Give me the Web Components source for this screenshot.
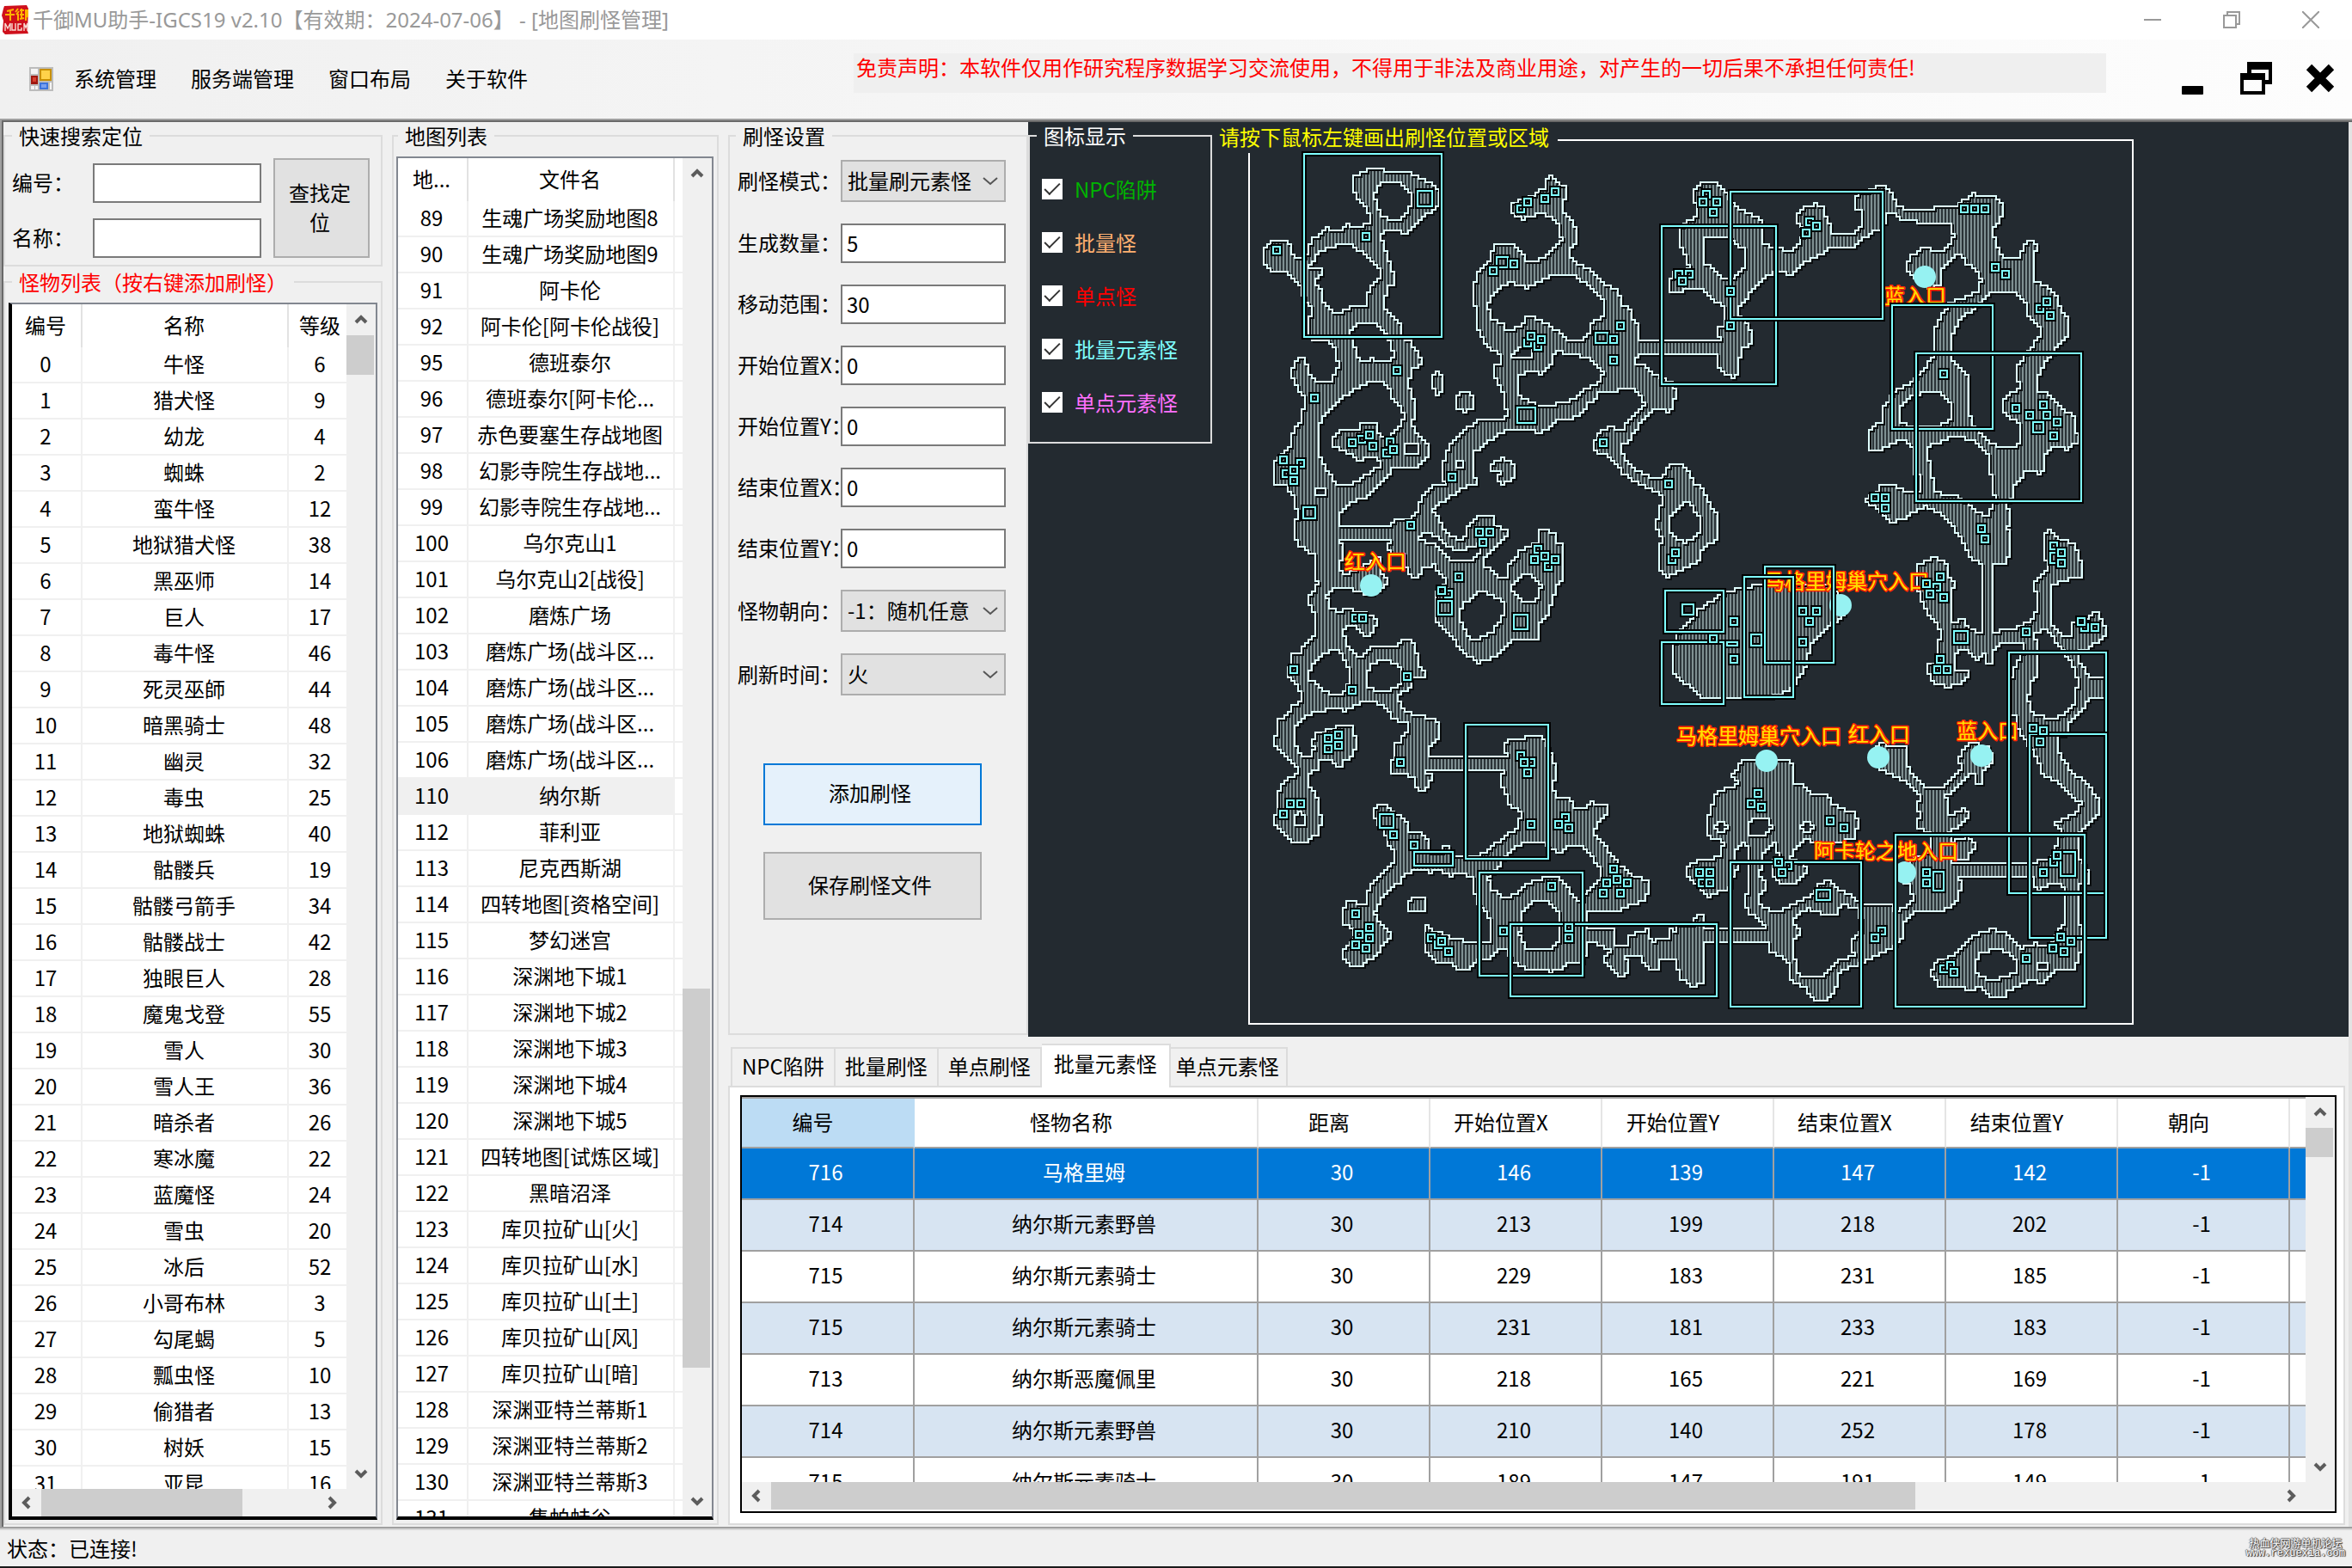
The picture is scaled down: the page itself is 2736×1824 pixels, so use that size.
<!DOCTYPE html>
<html lang="zh-CN">
<head>
<meta charset="utf-8">
<title>千御MU助手-IGCS19</title>
<style>
  html, body { margin: 0; height: 100%; }
  body { font: 24px/32px "Noto Sans CJK SC", "Noto Sans", sans-serif; color: #000; background: #f0f0f0; overflow: hidden; }
</style>
</head>
<body>
<app-window></app-window>
<script>
const define = (name, html, setup) => {
  const tpl = document.createElement('template');
  tpl.innerHTML = '<style>*{box-sizing:border-box}button,input,select{font:inherit;color:inherit;margin:0;border-radius:0}</style>' + html;
  customElements.define(name, class extends HTMLElement {
    connectedCallback() {
      if (this.shadowRoot) return;
      const root = this.attachShadow({ mode: 'open' });
      root.append(tpl.content.cloneNode(true));
      if (setup) setup.call(this, root);
    }
  });
};

/* ---------- title bar ---------- */
define('title-bar', `
<style>
  :host { display: flex; align-items: center; height: 46px; background: #fff; color: #999; padding-left: 2px; }
  .logo { width: 32px; height: 34px; margin-right: 4px; }
  span { flex: 1; white-space: nowrap; font-family: "Noto Sans", "Noto Sans CJK SC", sans-serif; }
  button { width: 92px; height: 46px; border: 0; background: none; padding: 0 4px 0 0; }
  button svg { display: block; margin: auto; }
</style>
<svg class="logo" viewBox="0 0 32 34"><path d="M3 1 L29 0 L31 4 L30 30 L31 33 L4 34 L1 31 L2 18 L0 12 L2 4Z" fill="#cf101c"/>
<path d="M6 7 L14 5 M4 11 H15 M10 6 V18 M19 4 L16 8 M20 7 L17 11 M19 10 V18 M21 6 H26 M23 4 V16 M21 11 H26 M21 16 L26 15 M27 6 H30 V13 L28 14 M28 5 V18" stroke="#ffb400" stroke-width="2" fill="none"/>
<path d="M4 30 V21 L7 27 L10 21 V30 M12 21 V29 H16 V21 M23 22 H19 V29 H23 V26 M26 30 V21 L28 26 L30 21 V30" stroke="#f8dcd4" stroke-width="1.4" fill="none"/></svg>
<span>千御MU助手-IGCS19 v2.10【有效期：2024-07-06】 - [地图刷怪管理]</span>
<button aria-label="最小化"><svg width="20" height="20"><path d="M0 10H20" stroke="#999" stroke-width="2"/></svg></button>
<button aria-label="还原"><svg width="20" height="20" fill="none" stroke="#999" stroke-width="2"><path d="M1 5H15V19H1ZM5 5V1H19V15H15"/></svg></button>
<button aria-label="关闭"><svg width="20" height="20"><path d="M0 0L20 20M20 0L0 20" stroke="#999" stroke-width="2"/></svg></button>
`);

/* ---------- menu bar ---------- */
define('menu-bar', `
<style>
  :host { display: flex; align-items: center; height: 92px; background: linear-gradient(90deg, #f0f0f0, #fdfdfd); padding-left: 34px; }
  nav { display: flex; gap: 40px; margin-left: 24px; padding-bottom: 2px; }
  nav button { border: 0; background: none; padding: 0; line-height: 32px; }
  p { flex: 1; margin: 2px 64px 16px 379px; height: 46px; padding: 0 0 0 3px; color: #f00; background: #efefef; white-space: nowrap; }
  .win { border: 0; background: none; padding: 0 0 2px; width: 74px; height: 46px; }
  .win svg { display: block; margin: auto; }
</style>
<svg width="28" height="28"><rect width="28" height="28" fill="#bcbcbc"/><path d="M2 2H10V8H2ZM2 22H6V26H2ZM7 22H10V26H7ZM24 18H26V26H24Z" fill="#f4f4f4"/><rect x="12" y="2" width="14" height="14" fill="#c89000"/><rect x="14" y="4" width="10" height="10" fill="#ffd24a"/><rect x="2" y="10" width="8" height="10" fill="#a01810"/><rect x="4" y="12" width="4" height="5" fill="#d84030"/><rect x="12" y="18" width="10" height="8" fill="#3c74dc"/><rect x="14" y="20" width="6" height="4" fill="#78a0f0"/></svg>
<nav><button>系统管理</button><button>服务端管理</button><button>窗口布局</button><button>关于软件</button></nav>
<p>免责声明：本软件仅用作研究程序数据学习交流使用，不得用于非法及商业用途，对产生的一切后果不承担任何责任!</p>
<button class="win" aria-label="最小化"><svg width="26" height="38"><rect y="28" width="25" height="10" rx="1"/></svg></button>
<button class="win" aria-label="还原"><svg width="38" height="38"><path d="M8 0H37V26H29V21H33V9H13V13H8ZM0 13H29V38H0ZM4 21V34H25V21Z" fill-rule="evenodd"/></svg></button>
<button class="win" aria-label="关闭"><svg width="34" height="34"><path d="M4 4L30 30M30 4L4 30" stroke="#000" stroke-width="9"/></svg></button>
`);

/* ---------- group box ---------- */
define('group-box', `
<style>
  :host { display: flex; min-height: 0; min-width: 0; }
  fieldset { flex: 1; min-width: 0; min-height: 0; margin: 0; border: 2px solid #dcdcdc; padding: var(--pad, 8px 4px 4px); display: flex; flex-direction: column; }
  legend { margin-left: var(--inset, 4px); padding: 0 8px; line-height: 32px; color: var(--title, inherit); }
</style>
<fieldset><legend></legend><slot></slot></fieldset>`, function (root) {
  root.querySelector('legend').textContent = this.getAttribute('label');
});

/* ---------- scroll bar ---------- */
define('scroll-bar', `
<style>
  :host { display: flex; flex-direction: column; width: 34px; background: #f0f0f0; }
  :host([across]) { flex-direction: row; width: auto; height: 32px; }
  button { flex: none; width: 34px; height: 36px; border: 0; padding: 0; background: none; }
  :host([across]) button { height: 32px; }
  svg { display: block; margin: auto; fill: none; stroke: #5c5c5c; stroke-width: 4; }
  .thumb { background: #cdcdcd; }
  :host(:not([across])) .thumb { margin-right: 2px; }
</style>
<button aria-label="向前"><svg width="18" height="18"><path/></svg></button>
<div class="before"></div><div class="thumb"></div><div class="after"></div>
<button aria-label="向后"><svg width="18" height="18"><path/></svg></button>`, function (root) {
  const start = +this.getAttribute('start'), size = +this.getAttribute('size');
  root.querySelector('.before').style.flex = start + ' 0 0';
  root.querySelector('.thumb').style.flex = size + ' 0 0';
  root.querySelector('.after').style.flex = (100 - start - size) + ' 0 0';
  const d = this.hasAttribute('across') ? ['M12 3L6 9L12 15', 'M6 3L12 9L6 15'] : ['M3 12L9 6L15 12', 'M3 6L9 12L15 6'];
  root.querySelectorAll('path').forEach((p, i) => p.setAttribute('d', d[i]));
});

/* ---------- quick search ---------- */
define('quick-search', `
<style>
  :host { display: flex; gap: 14px; align-items: flex-end; }
  .fields { display: grid; grid-template-columns: 94px 196px; row-gap: 18px; align-items: center; }
  label { padding-bottom: 2px; }
  input { width: 100%; height: 46px; border: 2px solid #7a7a7a; background: #fff; padding: 0 6px; }
  button { width: 112px; height: 116px; border: 2px solid #adadad; background: #e1e1e1; padding: 0 14px 2px 10px; line-height: 34px; }
</style>
<div class="fields"><label for="no">编号：</label><input id="no"><label for="nm">名称：</label><input id="nm"></div>
<button>查找定位</button>`);

/* ---------- list view ---------- */
const LISTS = {
  monsters: {
    cols: [82, 240, 76], head: ['编号', '名称', '等级'], v: [0, 3.5], h: [0, 73],
    rows: '牛怪 6,猎犬怪 9,幼龙 4,蜘蛛 2,蛮牛怪 12,地狱猎犬怪 38,黑巫师 14,巨人 17,毒牛怪 46,死灵巫師 44,暗黑骑士 48,幽灵 32,毒虫 25,地狱蜘蛛 40,骷髅兵 19,骷髅弓箭手 34,骷髅战士 42,独眼巨人 28,魔鬼戈登 55,雪人 30,雪人王 36,暗杀者 26,寒冰魔 22,蓝魔怪 24,雪虫 20,冰后 52,小哥布林 3,勾尾蝎 5,瓢虫怪 10,偷猎者 13,树妖 15,亚昆 16'
      .split(',').map((s, i) => [i, ...s.split(' ')])
  },
  maps: {
    cols: [82, 240, 76], head: ['地...', '文件名', ''], v: [61.7, 29.2], selected: '110',
    rows: ('89 生魂广场奖励地图8,90 生魂广场奖励地图9,91 阿卡伦,92 阿卡伦[阿卡伦战役],95 德班泰尔,96 德班泰尔[阿卡伦...,97 赤色要塞生存战地图,98 幻影寺院生存战地...,99 幻影寺院生存战地...,100 乌尔克山1,101 乌尔克山2[战役],102 磨炼广场,103 磨炼广场(战斗区...,104 磨炼广场(战斗区...,105 磨炼广场(战斗区...,106 磨炼广场(战斗区...,110 纳尔斯,112 菲利亚,113 尼克西斯湖,114 四转地图[资格空间],115 梦幻迷宫,116 深渊地下城1,117 深渊地下城2,118 深渊地下城3,119 深渊地下城4,120 深渊地下城5,121 四转地图[试炼区域],122 黑暗沼泽,123 库贝拉矿山[火],124 库贝拉矿山[水],125 库贝拉矿山[土],126 库贝拉矿山[风],127 库贝拉矿山[暗],128 深渊亚特兰蒂斯1,129 深渊亚特兰蒂斯2,130 深渊亚特兰蒂斯3,131 隽帕蛙谷')
      .split(',').map(s => [...s.split(' '), ''])
  }
};
const tableHTML = (d) => `<table style="width:${d.cols.reduce((a, b) => a + b)}px"><colgroup>${d.cols.map(w => `<col style="width:${w}px">`).join('')}</colgroup>
<thead><tr>${d.head.map(t => `<th>${t}</th>`).join('')}</tr></thead><tbody>${d.rows.map(r => `<tr${r[0] === d.selected ? ' class="sel"' : ''}>${r.map(c => `<td>${c}</td>`).join('')}</tr>`).join('')}</tbody></table>`;

define('list-view', `
<style>
  :host { flex: 1; min-height: 0; display: flex; flex-direction: column; background: #fff; border: 2px solid #828790; border-bottom: 4px solid #000; }
  :host([source=monsters]) { border-left: 4px solid #000; }
  .body { flex: 1; min-height: 0; display: flex; }
  .view { flex: 1; min-width: 0; overflow: hidden; }
  .body scroll-bar { flex: none; }
  .foot { display: flex; }
  .foot scroll-bar { flex: 1; }
  .corner { width: 34px; background: #f0f0f0; }
  table { table-layout: fixed; border-collapse: separate; border-spacing: 0; }
  th { height: 50px; font-weight: 400; padding: 0 2px 2px 0; border-right: 2px solid #e2e2e2; }
  td { height: 42px; padding: 0 2px 2px 0; text-align: center; white-space: nowrap; border: solid #f0f0f0; border-width: 0 2px 2px 0; }
  .sel td:not(:last-child) { background: #f0f0f0; }
</style>
<div class="body"><div class="view"></div></div>`, function (root) {
  const d = LISTS[this.getAttribute('source')];
  root.querySelector('.view').innerHTML = tableHTML(d);
  root.querySelector('.body').insertAdjacentHTML('beforeend', `<scroll-bar start="${d.v[0]}" size="${d.v[1]}"></scroll-bar>`);
  if (d.h) root.append(Object.assign(document.createElement('div'), { className: 'foot', innerHTML: `<scroll-bar across start="${d.h[0]}" size="${d.h[1]}"></scroll-bar><div class="corner"></div>` }));
});

/* ---------- settings ---------- */
define('spawn-form', `
<style>
  :host { display: flex; flex-direction: column; }
  .rows { display: flex; flex-direction: column; gap: 25px; }
  .row { display: grid; grid-template-columns: 120px 192px; align-items: center; }
  label { grid-column: 1; grid-row: 1; width: 120px; white-space: nowrap; padding-bottom: 2px; }
  input, select { grid-column: 2; grid-row: 1; width: 100%; }
  input { height: 46px; border: 2px solid #7a7a7a; background: #fff; padding: 0 5px 2px; outline: 0; position: relative; }
  select { appearance: none; height: 49px; border: 2px solid #adadad; background: #e1e1e1; padding: 0 30px 2px 6px; }
  .row svg { grid-column: 2; grid-row: 1; justify-self: end; margin-right: 8px; pointer-events: none; }
  .actions { display: flex; flex-direction: column; gap: 31px; width: 254px; margin: 79px 0 0 30px; }
  .actions button { height: 79px; border: 2px solid #adadad; background: #e1e1e1; padding: 0 6px 4px 0; }
  .actions .primary { height: 72px; border-color: #0078d7; background: #e5f1fb; }
</style>
<div class="rows"></div>
<div class="actions"><button class="primary">添加刷怪</button><button>保存刷怪文件</button></div>`, function (root) {
  const chev = '<svg width="20" height="12" fill="none" stroke="#555" stroke-width="2"><path d="M2 2L10 9L18 2"/></svg>';
  const rows = [['刷怪模式', '批量刷元素怪', 1], ['生成数量', '5'], ['移动范围', '30'], ['开始位置X', '0'], ['开始位置Y', '0'], ['结束位置X', '0'], ['结束位置Y', '0'], ['怪物朝向', '-1：随机任意', 1], ['刷新时间', '火', 1]];
  root.querySelector('.rows').innerHTML = rows.map(([l, v, s], i) => `<div class="row"><label for="f${i}">${l}：</label>${s ? `<select id="f${i}"><option>${v}</option></select>${chev}` : `<input id="f${i}" value="${v}">`}</div>`).join('');
});

/* ---------- legend ---------- */
define('icon-legend', `
<style>
  :host { display: flex; flex-direction: column; gap: 30px; padding-left: 2px; }
  label { display: flex; align-items: center; gap: 14px; }
  input { appearance: none; width: 24px; height: 24px; background: #fff; display: grid; place-items: center; }
  input:checked::after { content: ""; width: 16px; height: 7px; border: solid #333; border-width: 0 0 2px 2px; transform: rotate(-45deg); margin-bottom: 5px; }
</style>
<label style="color:#00b400"><input type="checkbox" checked>NPC陷阱</label>
<label style="color:#ffb070"><input type="checkbox" checked>批量怪</label>
<label style="color:#ff0000"><input type="checkbox" checked>单点怪</label>
<label style="color:#7fffff"><input type="checkbox" checked>批量元素怪</label>
<label style="color:#ff70ff"><input type="checkbox" checked>单点元素怪</label>`);

/* ---------- map ---------- */
/* Each sector has its own origin and scale; rings are flat x,y lists. */
const SECTORS = [
{ o: [1430, 130], s: [2.904, 2.904],
  land: [
  '413,235 425,218 440,206 465,195 525,195 530,206 618,206 632,220 660,232 688,245 705,270 712,290 705,320 690,335 660,350 632,375 615,400 600,410 580,405 575,398 525,400 515,412 515,435 527,470 540,500 548,530 560,550 560,582 540,585 535,615 518,620 518,665 540,680 565,705 583,730 585,765 610,778 620,800 640,820 655,840 640,855 622,870 608,900 608,935 620,960 630,1000 630,1035 620,1045 620,1065 632,1090 655,1105 675,1130 675,1155 660,1175 640,1197 565,1197 550,1200 545,1220 525,1245 500,1270 470,1300 435,1308 400,1330 370,1365 362,1385 375,1403 550,1403 553,1380 600,1380 610,1365 632,1355 640,1330 650,1300 670,1280 690,1262 730,1255 722,1235 717,1205 728,1170 745,1130 765,1100 790,1075 840,1045 910,1042 940,1025 935,1000 925,960 920,935 900,905 892,880 892,855 912,850 912,820 890,805 865,780 850,750 835,720 840,685 830,655 822,625 825,600 835,560 850,530 865,518 880,505 880,475 900,452 965,452 985,470 1000,500 1030,505 1060,495 1090,465 1122,435 1118,400 1105,375 1085,355 1060,343 1020,350 990,362 965,352 950,340 947,312 965,310 985,295 1030,285 1050,265 1065,255 1065,230 1085,218 1100,225 1115,245 1140,252 1140,290 1130,295 1130,340 1150,355 1170,390 1177,440 1155,465 1155,495 1190,520 1225,540 1250,570 1315,605 1325,650 1350,660 1360,700 1385,730 1385,775 1568,775 1568,816 1385,816 1375,830 1375,855 1410,860 1440,890 1490,912 1512,940 1512,965 1500,975 1498,1003 1483,1013 1440,1003 1420,1025 1385,1060 1370,1085 1350,1110 1325,1130 1330,1160 1345,1185 1370,1205 1400,1225 1450,1240 1475,1235 1475,1300 1455,1290 1420,1270 1370,1250 1330,1220 1305,1190 1280,1160 1240,1155 1228,1130 1228,1115 1250,1090 1265,1070 1290,1067 1330,1075 1345,1050 1370,1020 1405,990 1390,960 1365,935 1320,935 1310,945 1250,945 1245,965 1215,985 1190,1015 1165,1035 1110,1037 1080,1070 1045,1083 1005,1072 940,1075 910,1085 870,1120 820,1155 820,1235 838,1240 838,1256 800,1265 745,1300 700,1335 690,1345 705,1400 735,1430 775,1450 800,1435 798,1405 820,1385 850,1368 898,1368 898,1395 920,1405 945,1420 930,1440 910,1460 855,1480 775,1478 735,1450 705,1425 650,1425 632,1435 600,1440 550,1443 375,1443 385,1480 385,1500 360,1560 355,1568 287,1568 285,1495 260,1480 235,1455 218,1440 218,1405 235,1380 235,1350 218,1335 215,1300 195,1275 190,1257 155,1257 147,1225 155,1200 147,1185 170,1165 190,1150 210,1125 218,1065 240,1045 240,1020 258,985 262,970 235,940 215,905 207,885 218,850 230,833 258,833 265,870 285,905 345,913 360,875 380,850 357,835 355,795 330,775 275,765 262,720 285,660 258,640 240,590 205,555 185,538 150,538 120,520 112,495 112,465 145,440 190,440 212,450 212,485 245,497 258,500 265,460 280,430 320,405 335,390 350,403 380,403 400,380 440,392 475,370 475,345 455,320 435,290 425,270 413,245',
  '683,905 700,880 722,890 722,940 705,957 683,930', '762,965 785,948 815,948 828,970 820,1000 795,1013 765,995', '880,1195 925,1172 955,1182 967,1210 955,1245 920,1257 900,1240 925,1220 885,1215'],
  water: ['500,250 530,235 570,240 610,270 612,320 580,360 550,370 515,350 497,320 492,285', '300,475 330,460 400,445 430,460 465,490 505,530 510,560 480,590 462,635 470,658 405,660 370,683 320,655 315,610 295,585 295,565 318,545 315,530 270,525 270,515 290,500', '410,745 435,720 470,712 510,725 530,750 550,790 555,830 530,845 485,835 440,845 425,800 415,770',
  '480,910 515,912 540,935 550,970 585,1010 590,1040 560,1085 520,1105 500,1080 500,1055 440,1045 435,1075 370,1080 345,1105 350,1130 400,1150 430,1175 460,1173 500,1160 508,1195 470,1220 425,1250 400,1262 365,1262 330,1210 305,1165 305,1075 300,1055 330,1020 380,970 430,935',
  '880,625 905,600 950,575 1000,595 1040,578 1080,555 1120,548 1160,550 1190,570 1225,600 1262,635 1262,685 1225,720 1210,755 1190,775 1135,765 1110,740 1080,720 1050,705 1020,693 1000,695 985,725 940,740 915,710 888,705 875,665',
  '980,885 1030,878 1060,885 1085,855 1100,810 1140,815 1205,830 1235,850 1262,880 1250,915 1200,940 1160,970 1125,985 1090,990 1040,995 1010,975 980,960', '960,805 1018,795 1018,832 955,832', '597,1118 635,1118 635,1157 597,1157', '292,1270 322,1270 322,1300 292,1300', '770,1178 795,1178 795,1200 770,1200'],
  zones: '252,142,718,760 635,268,684,318 903,490,940,525 1238,745,1277,782 972,1000,1033,1050 250,1337,290,1373',
  spots: '461,421 159,467 985,328 1007,304 1065,293 1100,270 891,537 961,514 1321,723 1297,769 1297,839 1008,782 1042,794 1019,757 1054,769 566,873 287,966 447,1105 415,1117 473,1093 484,1131 543,1115 531,1152 554,1140 182,1175 240,1187 193,1222 217,1210 217,1245 752,1233 612,1396 845,1419 879,1419 856,1454 1264,1117 1483,1257 1495,1512 1507,1489 1042,1477 1065,1500 1030,1512 1077,1535 1100,1512' },
{ o: [1900, 130], s: [2.613, 2.904],
  land: [
  '10,775 265,775 265,760 252,750 255,730 275,720 275,660 240,630 205,597 160,597 130,618 107,600 107,570 125,545 150,540 172,525 150,470 137,440 140,400 155,375 190,355 190,305 180,290 182,265 205,240 250,240 280,270 300,310 350,345 385,360 395,400 397,450 440,462 480,470 512,430 515,390 493,360 495,345 520,322 560,310 583,330 585,355 600,380 605,413 665,415 690,390 690,330 670,325 672,290 690,270 735,265 735,252 770,252 785,280 800,310 830,333 905,333 915,322 975,320 1000,300 1035,277 1055,288 1095,288 1115,300 1127,345 1090,400 1105,450 1115,485 1170,497 1195,440 1220,440 1230,460 1220,480 1222,570 1260,590 1290,630 1300,670 1325,700 1325,750 1295,790 1265,825 1235,880 1222,935 1270,960 1300,1000 1340,1025 1345,1070 1355,1110 1320,1140 1285,1130 1255,1150 1250,1200 1240,1222 1195,1213 1160,1260 1150,1310 1135,1325 1147,1365 1138,1400 1147,1470 1135,1525 1095,1527 1095,1568 1060,1568 1058,1527 1030,1510 1000,1450 975,1410 960,1380 890,1330 850,1355 825,1375 785,1385 750,1350 700,1310 745,1285 745,1263 800,1265 825,1285 868,1285 868,1230 850,1215 850,1135 815,1105 760,1140 720,1140 712,1100 725,1065 755,1050 760,1000 790,950 850,910 870,890 910,830 920,800 912,750 930,700 965,645 1010,625 1045,610 1058,570 1050,545 1010,510 1000,480 970,490 940,530 935,580 915,595 880,590 850,560 830,530 840,490 875,462 900,463 930,475 960,455 975,420 965,380 860,372 810,360 790,345 765,340 770,370 755,395 720,410 675,455 600,457 560,490 510,515 485,550 440,538 400,555 370,590 345,630 320,660 322,690 350,720 362,760 350,795 325,800 322,885 308,897 275,885 255,860 255,830 265,820 265,816 10,816',
  '90,1225 115,1195 145,1195 175,1220 180,1250 215,1280 235,1330 258,1360 258,1440 210,1480 205,1515 170,1535 130,1560 105,1573 75,1540 85,1440 65,1400 85,1330 85,1290 60,1250 75,1240'],
  water: ['215,430 240,420 285,422 335,465 338,520 310,555 280,567 250,540 218,510',
  '1090,607 1160,607 1190,640 1200,690 1235,730 1235,760 1200,810 1170,860 1165,890 1175,930 1130,965 1120,1000 1140,1035 1180,1055 1175,1110 1160,1135 1110,1135 1085,1115 1035,1065 1025,1030 1015,950 1020,900 970,840 968,765 990,700 1020,680 1060,640',
  '815,990 840,965 900,945 930,945 962,985 962,1040 930,1065 840,1068 812,1045', '895,1130 975,1097 1040,1110 1080,1160 1090,1250 1100,1310 1075,1365 1045,1355 990,1300 920,1285 900,1200', '165,1315 200,1365 200,1425 155,1457 112,1420 115,1365'],
  zones: '87,385,434,920 295,270,757,700 786,652,1091,1072 859,816,1362,1315 1215,1048,1247,1084 1268,1490,1290,1524',
  spots: '222,280 211,304 253,304 242,340 138,548 169,548 148,573 295,606 295,722 536,373 556,386 525,409 1006,328 1037,328 1069,328 1100,525 1131,548 1237,665 1256,641 1267,688 942,885 1163,1001 1205,1025 1247,990 1257,1024 1288,1048 1277,1094 1058,1408 1069,1443 734,1303 765,1303 765,1338 1278,1466 1300,1489 1300,1525' },
{ o: [1430, 600], s: [2.904, 2.529],
  land: [
  '218,30 218,65 240,90 285,110 287,175 298,195 290,215 265,240 265,258 285,280 287,350 270,370 250,385 240,405 205,407 205,440 193,465 210,485 235,500 242,545 215,560 190,590 160,600 165,635 147,655 150,675 185,700 205,725 230,740 230,758 190,775 170,800 160,830 160,875 147,885 155,910 185,940 215,957 270,957 290,940 305,935 305,910 317,900 305,880 303,840 290,815 270,800 270,760 300,745 305,720 340,715 365,735 385,735 390,717 415,710 425,685 433,680 433,650 420,648 420,620 360,620 340,630 295,640 285,655 275,670 287,680 280,710 250,708 225,680 222,620 240,600 290,578 370,562 390,573 440,550 480,545 520,562 560,600 600,607 602,640 578,645 575,668 555,675 560,700 558,720 542,725 545,755 600,760 625,775 635,805 665,805 688,770 685,760 665,760 665,748 940,748 915,765 917,790 935,815 940,850 985,870 975,915 930,945 870,985 840,1005 790,1003 755,1000 740,975 720,975 715,990 680,990 675,955 655,935 610,930 600,905 570,880 550,870 525,848 510,845 495,855 485,880 500,905 530,940 535,970 555,985 555,1015 520,1045 485,1075 470,1100 470,1135 440,1145 430,1137 400,1137 380,1170 380,1195 410,1215 425,1240 400,1262 380,1280 390,1310 410,1322 445,1322 490,1300 515,1270 550,1228 520,1205 500,1190 490,1165 520,1120 540,1100 575,1080 600,1050 650,1040 680,1048 710,1042 740,1058 785,1055 830,1060 822,1090 835,1130 865,1165 880,1190 880,1250 850,1257 800,1252 760,1245 720,1228 690,1220 675,1208 658,1208 658,1265 680,1300 710,1320 740,1315 790,1342 820,1325 835,1305 880,1302 910,1275 940,1280 960,1315 1000,1330 1090,1342 1130,1330 1150,1310 1190,1312 1205,1290 1205,1255 1240,1255 1285,1280 1265,1305 1290,1330 1315,1353 1340,1353 1350,1325 1340,1295 1400,1295 1410,1330 1450,1332 1460,1300 1510,1298 1530,1350 1568,1383 1568,1205 1510,1205 1500,1240 1460,1245 1420,1255 1420,1215 1375,1230 1370,1265 1305,1268 1305,1215 1205,1215 1205,1170 1255,1160 1320,1160 1360,1145 1400,1130 1420,1105 1415,1075 1390,1065 1360,1062 1310,1020 1270,970 1235,935 1240,910 1275,880 1280,850 1220,843 1200,862 1165,862 1150,833 1100,830 1095,780 1105,760 1100,735 1090,700 1060,650 1000,650 985,660 940,662 925,685 940,700 940,710 668,710 670,690 700,665 712,620 695,600 650,590 605,580 580,565 570,530 590,513 615,510 620,480 655,480 665,463 640,435 630,390 615,367 580,367 560,385 505,380 480,390 445,418 425,405 400,385 387,350 390,325 420,325 450,350 480,350 500,315 490,290 430,285 415,270 390,268 370,285 335,265 330,235 350,215 380,208 440,222 480,235 520,210 538,190 515,175 515,120 440,150 400,172 355,160 380,125 385,95 375,70 550,70 530,90 540,105 590,115 600,165 632,188 655,155 690,145 725,180 730,200 695,225 700,250 693,290 697,310 740,350 800,405 840,432 870,425 900,412 950,370 960,362 1040,360 1045,320 1070,300 1090,250 1110,205 1130,178 1130,85 1108,82 1105,55 1060,35 1042,50 1040,80 1000,95 975,110 940,155 940,182 920,185 870,152 850,130 910,85 942,50 900,35 895,0 235,0',
  '600,1145 630,1118 660,1118 665,1150 650,1170 635,1160 615,1170 600,1160'],
  water: ['700,0 735,50 775,72 800,55 800,35 845,2 845,-2 700,-2', '370,-2 375,32 550,32 555,12 605,10 620,-2', '632,62 660,50 700,60 740,95 790,100 845,85 850,105 820,130 755,135 720,110 690,85 650,72',
  '275,440 310,415 345,395 370,400 400,435 403,490 385,520 345,528 310,505 270,480', '460,460 490,432 540,425 575,445 578,490 540,518 495,518 460,495', '785,265 820,240 850,222 880,232 925,250 925,290 890,340 860,357 820,365 790,330 780,300', '960,200 1000,170 1025,180 1052,200 1050,235 1020,255 980,245 955,220', '235,870 250,880 255,910 232,912 215,895',
  '990,1190 990,1170 1020,1135 1070,1130 1110,1160 1120,1190 1110,1250 1090,1278 1010,1278 980,1235',
  '875,1060 920,1020 940,990 990,965 1065,960 1085,985 1120,988 1140,970 1190,970 1230,1010 1260,1050 1245,1075 1205,1105 1190,1130 1160,1125 1140,1090 1110,1065 1060,1065 1000,1085 975,1110 930,1125 880,1095'],
  zones: '798,614,1077,1010 845,1049,1194,1354 949,1201,1648,1414 706,250,753,291 961,290,1009,333 507,878,556,919 624,988,754,1029',
  spots: '775,180 740,230 717,220 427,301 450,301 217,452 601,473 415,514 334,655 369,645 334,685 369,675 577,725 984,705 1019,725 995,725 1007,756 206,847 240,847 182,878 1019,908 1135,888 1112,908 1146,918 1297,1040 1310,1070 1274,1080 1344,1080 1263,1110 1321,1110 554,938 624,968 427,1170 473,1211 438,1231 473,1242 427,1261 461,1272 682,1242 705,1261 717,1252 740,1282 926,1221 1088,1089 1146,1211 1146,1242' },
{ o: [1900, 600], s: [2.613, 2.529],
  land: [
  '860,145 905,125 925,125 955,145 962,180 978,200 965,225 962,270 970,315 1005,305 1020,330 1058,345 1058,140 1095,140 1095,345 1130,335 1180,325 1210,305 1225,275 1225,225 1215,210 1225,185 1265,160 1248,110 1248,55 1265,42 1290,65 1335,80 1355,110 1365,180 1310,190 1265,210 1265,260 1275,325 1305,352 1330,355 1335,310 1370,310 1395,290 1420,275 1420,300 1440,335 1435,355 1385,390 1355,395 1358,430 1390,478 1435,478 1432,535 1390,537 1350,590 1325,605 1325,640 1292,645 1295,700 1330,750 1385,795 1415,840 1418,870 1370,920 1355,930 1358,1010 1388,1050 1385,1080 1355,1085 1357,1195 1368,1250 1355,1300 1340,1332 1285,1335 1245,1375 1210,1365 1140,1400 1130,1413 1080,1413 1055,1390 1015,1392 1000,1383 930,1383 900,1345 930,1305 975,1295 1030,1235 1090,1217 1140,1230 1180,1270 1220,1258 1270,1265 1290,1220 1310,1200 1315,1130 1310,1100 1295,1080 1265,1080 1240,1100 1215,1095 1215,1060 985,1060 1000,1085 980,1140 935,1168 865,1160 825,1190 820,1245 780,1275 700,1312 630,1340 615,1390 595,1422 545,1422 520,1385 480,1370 470,1310 410,1280 410,1250 205,1250 215,1265 215,1375 180,1383 145,1360 125,1300 80,1300 80,1332 40,1330 20,1295 -20,1290 -20,1240 10,1225 45,1217 55,1255 105,1245 110,1205 140,1235 180,1200 190,1178 217,1178 210,1215 410,1215 350,1165 338,1140 340,1120 350,1100 345,1020 355,980 330,960 310,990 315,1040 290,1095 225,1120 180,1080 160,1045 175,1020 220,1010 260,1005 275,960 225,940 222,905 235,870 245,825 275,803 310,800 318,785 297,765 315,745 325,722 370,718 480,720 488,785 515,792 550,822 595,825 605,850 670,875 687,905 670,950 630,960 520,955 490,980 478,1005 520,1030 530,1040 490,1080 450,1080 420,1055 420,1020 440,1010 437,960 400,985 390,1010 385,1065 405,1085 390,1110 378,1130 400,1155 440,1163 500,1135 550,1110 560,1080 600,1075 620,1100 660,1115 700,1145 785,1147 790,1165 820,1155 858,1130 835,1085 800,1060 830,1020 870,1000 900,990 900,930 860,920 870,880 860,850 880,830 830,780 790,765 750,745 720,710 750,670 830,682 833,740 890,800 940,800 1000,740 985,715 1020,670 1080,675 1095,725 1065,750 1060,795 1040,790 1035,760 1020,765 950,825 960,880 1010,862 1020,880 985,915 960,930 965,960 1015,945 1042,970 1015,1010 960,1010 985,1025 1220,1025 1230,1015 1270,1010 1290,960 1300,920 1285,905 1350,870 1360,845 1330,820 1290,780 1245,765 1235,730 1205,680 1170,630 1165,590 1145,580 1145,490 1165,430 1185,400 1185,372 1120,375 1095,400 1092,432 1075,430 1070,405 1045,420 1010,395 980,400 975,460 1015,455 1020,470 985,498 950,503 905,485 890,440 925,430 920,380 942,355 920,315 895,285 870,245 860,170',
  '170,310 130,345 120,400 118,460 210,535 415,535 480,510 500,480 520,450 540,380 600,320 640,295 610,200 380,205 330,213 280,225 200,275'],
  water: ['1230,400 1230,460 1205,500 1200,540 1210,580 1270,600 1320,575 1345,545 1350,480 1330,430 1300,390 1265,345 1250,335 1220,350', '345,905 370,890 410,890 420,920 400,945 350,935', '265,897 283,915 265,935 248,915', '528,897 547,915 528,935 510,915',
  '480,1190 530,1155 570,1170 590,1180 620,1170 630,1140 680,1155 690,1180 690,1225 665,1250 670,1295 620,1310 570,1357 505,1357 490,1300 490,1250 508,1225 490,1205', '1035,1345 1050,1290 1110,1272 1150,1290 1170,1320 1165,1345 1125,1355 1090,1368', '1230,1312 1258,1312 1258,1338 1230,1338'],
  zones: '96,219,275,342 86,371,275,553 399,149,610,432 336,179,486,533 1142,402,1436,1110 1205,643,1436,1242 295,1019,693,1443 796,938,1373,1443 148,260,182,290 357,350,390,382 974,338,1017,374 556,1099,599,1131 911,1047,944,1102 1298,988,1342,1059 285,371,317,382',
  spots: '306,311 242,362 306,422 515,280 556,280 536,311 515,372 923,210 933,180 891,199 902,230 942,240 933,422 926,452 954,452 1194,341 1372,330 1361,311 1403,330 1247,633 1215,625 1236,665 379,817 357,847 389,857 598,897 640,917 208,1080 200,1049 232,1049 232,1080 471,1030 441,1019 452,1049 891,1049 891,1080 755,1221 734,1242 1247,1049 1278,1020 1288,998 1194,1302 1276,1272 1299,1240 1330,1252 1309,1282 943,1332 963,1322 975,1342' }
];
const GATES = [[1595, 681], [2239, 322], [2141, 704], [2055, 885], [2185, 881], [2305, 879], [2216, 1015]];
const GATE_NAMES = [[1564, 662, '红入口'], [2192, 353, '蓝入口'], [2052, 685, '马格里姆巢穴入口'], [1950, 865, '马格里姆巢穴入口'], [2150, 863, '红入口'], [2276, 859, '蓝入口'], [2110, 999, '阿卡轮之地入口']];

define('map-view', `
<style>
  :host { display: block; }
  svg { display: block; width: 100%; height: auto; font: 24px "Noto Sans CJK SC", sans-serif; }
  .crisp { shape-rendering: crispEdges; fill: none; }
  .name { fill: #ffe000; stroke: #ff2000; stroke-width: 3px; stroke-linejoin: round; paint-order: stroke; }
</style>
<div></div>`, function (root) {
  const N = 256, CELL = 4, X0 = 1454, Y0 = 164;
  const grid = new Uint8Array(N * N);
  const paint = (sec, ring, val) => {
    const pts = ring.split(' ').map(p => { const [x, y] = p.split(',').map(Number); return [(sec.o[0] + x / sec.s[0] - X0) / CELL, (sec.o[1] + y / sec.s[1] - Y0) / CELL]; });
    for (let r = 0; r < N; r++) {
      const yc = r + .5, xs = [];
      pts.forEach(([x1, y1], i) => {
        const [x2, y2] = pts[(i + 1) % pts.length];
        if ((y1 <= yc) !== (y2 <= yc)) xs.push(x1 + (yc - y1) * (x2 - x1) / (y2 - y1));
      });
      xs.sort((a, b) => a - b);
      for (let i = 0; i + 1 < xs.length; i += 2)
        for (let c = Math.max(0, Math.round(xs[i])); c < Math.min(N, Math.round(xs[i + 1])); c++) grid[r * N + c] = val;
    }
  };
  SECTORS.forEach(s => s.land.forEach(r => paint(s, r, 1)));
  SECTORS.forEach(s => s.water.forEach(r => paint(s, r, 0)));
  const at = (c, r) => c >= 0 && r >= 0 && c < N && r < N ? grid[r * N + c] : 0;
  let fill = '', edge = '';
  for (let r = 0; r <= N; r++) {
    for (let c = 0; c < N; c++) {
      if (at(c, r) && !at(c - 1, r)) { let e = c; while (at(e, r)) e++; fill += `M${X0 + c * CELL} ${Y0 + r * CELL}h${(e - c) * CELL}v4h-${(e - c) * CELL}z`; }
      const diff = k => at(k, r) !== at(k, r - 1);
      if (diff(c) && !(c > 0 && diff(c - 1))) { let e = c; while (e < N && diff(e)) e++; edge += `M${X0 + c * CELL - 1} ${Y0 + r * CELL}h${(e - c) * CELL + 2}`; }
    }
  }
  for (let c = 0; c <= N; c++) for (let r = 0; r < N; r++) {
    const diff = k => at(c, k) !== at(c - 1, k);
    if (diff(r) && !(r > 0 && diff(r - 1))) { let e = r; while (e < N && diff(e)) e++; edge += `M${X0 + c * CELL} ${Y0 + r * CELL}v${(e - r) * CELL}`; }
  }
  let marks = '';
  const box = (x1, y1, x2, y2) => {
    [x1, y1, x2, y2] = [x1, y1, x2, y2].map(Math.round);
    const g = `x="${x1}" y="${y1}" width="${x2 - x1}" height="${y2 - y1}"`;
    marks += `<rect ${g} stroke="#000" stroke-width="6"/><rect ${g} stroke="#7fffff" stroke-width="2"/>`;
  };
  SECTORS.forEach(s => {
    s.zones.split(' ').forEach(z => { const [a, b, c, d] = z.split(',').map(Number); box(s.o[0] + a / s.s[0], s.o[1] + b / s.s[1], s.o[0] + c / s.s[0], s.o[1] + d / s.s[1]); });
    s.spots.split(' ').forEach(z => { const [a, b] = z.split(',').map(Number); const x = Math.round(s.o[0] + a / s.s[0]), y = Math.round(s.o[1] + b / s.s[1]); box(x - 4, y - 4, x + 4, y + 4); });
  });
  root.querySelector('div').innerHTML = `<svg viewBox="1410 142 1322 1064">
  <defs><pattern id="hatch" width="4" height="4" patternUnits="userSpaceOnUse"><rect width="4" height="4" fill="#2b3438"/><rect width="2" height="4" fill="#7f9092"/></pattern></defs>
  <path d="${fill}" fill="url(#hatch)" shape-rendering="crispEdges"/>
  <path class="crisp" d="${edge}" stroke="#0a0d0f" stroke-width="2" transform="translate(2 2)"/>
  <path class="crisp" d="${edge}" stroke="#e0ffff" stroke-width="2"/>
  <path class="crisp" d="M1812 163H2481V1191H1453V178" stroke="#fff" stroke-width="2"/>
  ${GATES.map(([x, y]) => `<circle cx="${x}" cy="${y}" r="13" fill="#96f2f2"/>`).join('')}
  ${GATE_NAMES.map(([x, y, t]) => `<text class="name" x="${x}" y="${y}">${t}</text>`).join('')}
  <g class="crisp">${marks}</g>
  <text x="1418" y="169" fill="#ff0">请按下鼠标左键画出刷怪位置或区域</text></svg>`;
});

/* ---------- data grid in tabs ---------- */
define('spawn-tabs', `
<style>
  :host { display: flex; flex-direction: column; min-height: 0; min-width: 0; padding: 8px 4px 2px 0; }
  nav { display: flex; align-items: flex-end; padding-left: 3px; }
  nav button { height: 45px; padding: 0 11px 3px; border: 2px solid #dcdcdc; border-bottom: 0; border-left: 0; background: #f0f0f0; white-space: nowrap; }
  nav button:first-child { border-left: 2px solid #dcdcdc; }
  nav button.on { background: #fff; height: 51px; margin-bottom: -2px; padding: 0 14px 8px; position: relative; }
  nav button:last-child { padding: 0 8px 3px 6px; }
  .page { flex: 1; min-height: 0; display: flex; background: #fff; border: 2px solid #dcdcdc; padding: 9px 8px 12px 12px; }
  .grid { flex: 1; min-width: 0; display: flex; flex-direction: column; border: 2px solid #000; background: #fff; }
  .body { flex: 1; min-height: 0; display: flex; }
  .view { flex: 1; min-width: 0; overflow: hidden; border-top: 2px solid #a0a0a0; }
  .foot { display: flex; border-bottom: 2px solid #f8f8f8; }
  .foot scroll-bar { flex: 1; }
  .corner { width: 34px; background: #f0f0f0; }
  table { table-layout: fixed; border-collapse: separate; border-spacing: 0; }
  th { height: 58px; font-weight: 400; padding: 0 34px 2px 0; border-right: 2px solid #e5e5e5; border-bottom: 2px solid #a0a0a0; }
  th:first-child { background: #bcdcf4; border-right-color: #bcdcf4; }
  td { height: 60px; padding: 0 4px 4px 0; text-align: center; border: solid #a0a0a0; border-width: 0 2px 2px 0; }
  tr:nth-child(even) td { background: #d7e4f2; }
  tbody tr:first-child td { background: #0078d7; color: #fff; }
</style>
<nav><button>NPC陷阱</button><button>批量刷怪</button><button>单点刷怪</button><button class="on">批量元素怪</button><button>单点元素怪</button></nav>
<div class="page"><div class="grid">
  <div class="body"><div class="view"></div><scroll-bar start="0" size="9"></scroll-bar></div>
  <div class="foot"><scroll-bar across start="0" size="76"></scroll-bar><div class="corner"></div></div>
</div></div>`, function (root) {
  const rows = '716 马格里姆 30 146 139 147 142 -1,714 纳尔斯元素野兽 30 213 199 218 202 -1,715 纳尔斯元素骑士 30 229 183 231 185 -1,715 纳尔斯元素骑士 30 231 181 233 183 -1,713 纳尔斯恶魔佩里 30 218 165 221 169 -1,714 纳尔斯元素野兽 30 210 140 252 178 -1,715 纳尔斯元素骑士 30 189 147 191 149 -1'.split(',').map(r => [...r.split(' '), '']);
  root.querySelector('.view').innerHTML = tableHTML({ cols: [201, 400, 200, 200, 200, 200, 200, 200, 200], head: ['编号', '怪物名称', '距离', '开始位置X', '开始位置Y', '结束位置X', '结束位置Y', '朝向', ''], rows });
});

/* ---------- status bar ---------- */
define('status-bar', `
<style>
  :host { display: flex; align-items: center; justify-content: space-between; height: 46px; padding: 0 8px; border-top: 2px solid #d7d7d7; border-bottom: 2px solid #1a1a1a; background: #f0f0f0; box-sizing: border-box; }
  small { font-size: 12px; line-height: 12px; text-align: center; color: #fff; text-shadow: 1px 1px 1px #333, -1px 0 1px #777, 0 -1px 1px #777, 1px 0 1px #444; }
  small span { display: block; }
  .url { font-family: "Liberation Mono", monospace; }
</style>
<span>状态：已连接!</span>
<small><span>热血侠网游单机论坛</span><span class="url">www.rexuexia.com</span></small>`);

/* ---------- window ---------- */
define('app-window', `
<style>
  :host { display: flex; flex-direction: column; height: 100vh; }
  title-bar, menu-bar, status-bar { flex: none; }
  main { flex: 1; min-height: 0; display: flex; border: solid #696969; border-width: 2px 0 0 2px; outline: 2px solid #a0a0a0; margin: 2px 0 2px 2px; background: #f0f0f0; }
  .side { flex: none; width: 441px; display: flex; flex-direction: column; gap: 2px; padding-bottom: 2px; }
  .maps { flex: none; width: 380px; margin: 0 11px; padding-bottom: 2px; --inset: 2px; --pad: 8px 4px 4px 3px; }
  .side .list { flex: 1; --title: #f00; }
  .search { --pad: 10px 8px 8px; --inset: 0px; }
  .work { flex: 1; min-width: 0; display: flex; flex-direction: column; border-right: 4px solid #e3e3e3; }
  .top { display: flex; }
  .form { flex: none; width: 349px; padding-bottom: 2px; --pad: 12px 9px; --inset: -2px; }
  .dark { flex: 1; min-width: 0; display: flex; align-items: flex-start; background: #232a30; }
  .legend { flex: none; width: 214px; color: #fff; --pad: 30px 12px; --inset: -4px; }
  map-view { flex: 1; min-width: 0; }
  spawn-tabs { flex: 1; }
</style>
<title-bar></title-bar>
<menu-bar></menu-bar>
<main>
  <div class="side">
    <group-box class="search" label="快速搜索定位"><quick-search></quick-search></group-box>
    <group-box class="list" label="怪物列表（按右键添加刷怪）"><list-view source="monsters"></list-view></group-box>
  </div>
  <group-box class="maps" label="地图列表"><list-view source="maps"></list-view></group-box>
  <div class="work">
    <div class="top">
      <group-box class="form" label="刷怪设置"><spawn-form></spawn-form></group-box>
      <div class="dark">
        <group-box class="legend" label="图标显示"><icon-legend></icon-legend></group-box>
        <map-view></map-view>
      </div>
    </div>
    <spawn-tabs></spawn-tabs>
  </div>
</main>
<status-bar></status-bar>`);
</script>
</body>
</html>
